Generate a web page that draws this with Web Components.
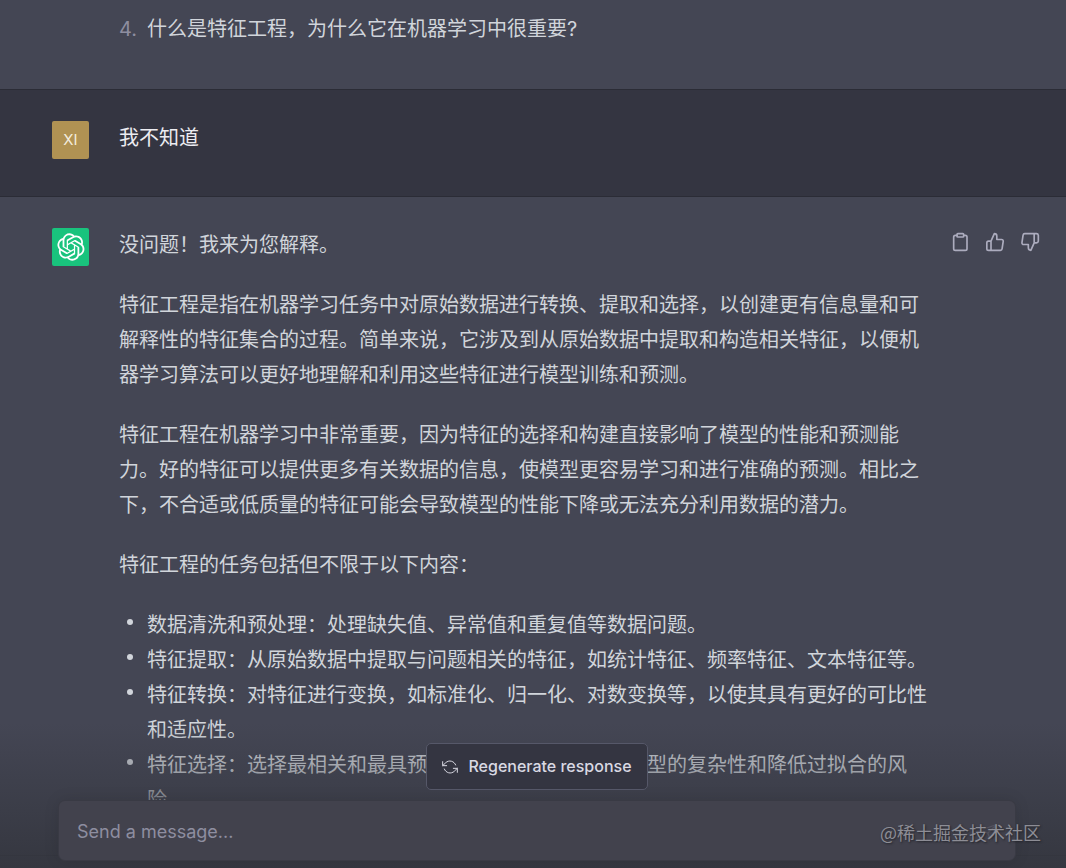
<!DOCTYPE html>
<html lang="zh-CN">
<head>
<meta charset="utf-8">
<meta name="viewport" content="width=device-width, initial-scale=1">
<title>Chat</title>
<style>
  body { margin: 0; background: #444654; font-family: Inter, "Noto Sans CJK SC", sans-serif; }
  ul, ol { list-style: none; }
  ol { counter-reset: item 3; }
  li { display: flex; }
  li::before { flex: none; }
  ol > li::before { counter-increment: item; content: counter(item) "."; width: 28px; color: #8e8ea0; }
  ul > li::before { content: ""; width: 6px; height: 6px; margin: 11px 14px 0 8px; border-radius: 50%; background: currentColor; }
</style>
</head>
<body>
<chat-app>
  <chat-message>
    <ol><li>什么是特征工程，为什么它在机器学习中很重要?</li></ol>
  </chat-message>
  <chat-message role-name="user">
    <user-avatar slot="avatar">XI</user-avatar>
    <p>我不知道</p>
  </chat-message>
  <chat-message>
    <bot-avatar slot="avatar"></bot-avatar>
    <p>没问题！我来为您解释。</p>
    <p>特征工程是指在机器学习任务中对原始数据进行转换、提取和选择，以创建更有信息量和可解释性的特征集合的过程。简单来说，它涉及到从原始数据中提取和构造相关特征，以便机器学习算法可以更好地理解和利用这些特征进行模型训练和预测。</p>
    <p>特征工程在机器学习中非常重要，因为特征的选择和构建直接影响了模型的性能和预测能力。好的特征可以提供更多有关数据的信息，使模型更容易学习和进行准确的预测。相比之下，不合适或低质量的特征可能会导致模型的性能下降或无法充分利用数据的潜力。</p>
    <p>特征工程的任务包括但不限于以下内容：</p>
    <ul>
      <li>数据清洗和预处理：处理缺失值、异常值和重复值等数据问题。</li>
      <li>特征提取：从原始数据中提取与问题相关的特征，如统计特征、频率特征、文本特征等。</li>
      <li>特征转换：对特征进行变换，如标准化、归一化、对数变换等，以使其具有更好的可比性和适应性。</li>
      <li>特征选择：选择最相关和最具预测能力的特征，以减少模型的复杂性和降低过拟合的风险。</li>
    </ul>
    <message-actions slot="actions"></message-actions>
  </chat-message>
  <chat-composer slot="footer"></chat-composer>
  <site-watermark slot="watermark">@稀土掘金技术社区</site-watermark>
</chat-app>

<script>
const define = (name, html) => {
  const template = document.createElement('template');
  template.innerHTML = html;
  customElements.define(name, class extends HTMLElement {
    constructor() {
      super();
      this.attachShadow({ mode: 'open' }).append(template.content.cloneNode(true));
    }
  });
};

define('chat-app', `
  <style>
    :host { display: block; position: relative; height: 100vh; overflow: hidden; }
    ::slotted([slot=footer]) { position: absolute; inset: auto 0 0 0; }
    ::slotted([slot=watermark]) { position: absolute; right: 25px; bottom: 21px; }
  </style>
  <main><slot></slot></main>
  <slot name="footer"></slot>
  <slot name="watermark"></slot>`);

define('chat-message', `
  <style>
    :host { display: block; background: #444654; color: #d1d5db; border-bottom: 1px solid #2b2c36;
      font-size: 20px; line-height: 35px; padding: 31px 26px 37px 52px; }
    :host(:first-child) { padding-top: 12px; padding-bottom: 42px; }
    :host([role-name=user]) { background: #343541; color: #ececf1; }
    .row { display: grid; grid-template-columns: 37px minmax(0, 1fr) 88px; max-width: 988px; margin: 0 auto; }
    .body { display: flex; flex-direction: column; gap: 25px; padding: 0 20px 0 30px; }
    ::slotted(*) { margin: 0 !important; padding-left: 0 !important; }
  </style>
  <article class="row">
    <div><slot name="avatar"></slot></div>
    <div class="body"><slot></slot></div>
    <div><slot name="actions"></slot></div>
  </article>`);

define('user-avatar', `
  <style>
    :host { display: flex; align-items: center; justify-content: center; height: 38px; border-radius: 2px;
      background: #b09253; color: #f3ecdd; font-size: 15px; line-height: 20px; }
  </style><slot></slot>`);

define('bot-avatar', `
  <style>
    :host { display: flex; align-items: center; justify-content: center; height: 38px; border-radius: 2px;
      background: #19c37d; color: #fff; }
  </style>
  <svg width="28" height="28" viewBox="0 0 41 41" fill="currentColor" role="img" aria-label="ChatGPT"><path d="M37.5324 16.8707C37.9808 15.5241 38.1363 14.0974 37.9886 12.6859C37.8409 11.2744 37.3934 9.91076 36.676 8.68622C35.6126 6.83404 33.9882 5.3676 32.0373 4.4985C30.0864 3.62941 27.9098 3.40259 25.8215 3.85078C24.8796 2.7893 23.7219 1.94125 22.4257 1.36341C21.1295 0.785575 19.7249 0.491269 18.3058 0.500197C16.1708 0.495044 14.0893 1.16803 12.3614 2.42214C10.6335 3.67624 9.34853 5.44666 8.6917 7.47815C7.30085 7.76286 5.98686 8.3414 4.8377 9.17505C3.68854 10.0087 2.73073 11.0782 2.02839 12.312C0.956464 14.1591 0.498905 16.2988 0.721698 18.4228C0.944492 20.5467 1.83612 22.5449 3.268 24.1293C2.81966 25.4759 2.66413 26.9026 2.81182 28.3141C2.95951 29.7256 3.40701 31.0892 4.12437 32.3138C5.18791 34.1659 6.8123 35.6322 8.76321 36.5013C10.7141 37.3704 12.8907 37.5973 14.9789 37.1492C15.9208 38.2107 17.0786 39.0587 18.3747 39.6366C19.6709 40.2144 21.0755 40.5087 22.4946 40.4998C24.6307 40.5054 26.7133 39.8321 28.4418 38.5772C30.1704 37.3223 31.4556 35.5506 32.1119 33.5179C33.5027 33.2332 34.8167 32.6547 35.9659 31.821C37.115 30.9874 38.0728 29.9178 38.7752 28.684C39.8458 26.8371 40.3023 24.6979 40.0789 22.5748C39.8556 20.4517 38.9639 18.4544 37.5324 16.8707ZM22.4978 37.8849C20.7443 37.8874 19.0459 37.2733 17.6994 36.1501C17.7601 36.117 17.8666 36.0586 17.936 36.0161L25.9004 31.4156C26.1003 31.3019 26.2663 31.137 26.3813 30.9378C26.4964 30.7386 26.5563 30.5124 26.5549 30.2825V19.0542L29.9213 20.998C29.9389 21.0068 29.9541 21.0198 29.9656 21.0359C29.977 21.052 29.9842 21.0707 29.9867 21.0902V30.3889C29.9842 32.375 29.1946 34.2791 27.7909 35.6841C26.3872 37.0892 24.4838 37.8806 22.4978 37.8849ZM6.39227 31.0064C5.51397 29.4888 5.19742 27.7107 5.49804 25.9832C5.55718 26.0187 5.66048 26.0818 5.73461 26.1244L13.699 30.7248C13.8975 30.8408 14.1233 30.902 14.3532 30.902C14.583 30.902 14.8088 30.8408 15.0073 30.7248L24.731 25.1103V28.9979C24.7321 29.0177 24.7283 29.0376 24.7199 29.0556C24.7115 29.0736 24.6988 29.0893 24.6829 29.1012L16.6317 33.7497C14.9096 34.7416 12.8643 35.0097 10.9447 34.4954C9.02506 33.9811 7.38785 32.7263 6.39227 31.0064ZM4.29707 13.6194C5.17156 12.0998 6.55279 10.9364 8.19885 10.3327C8.19885 10.4013 8.19491 10.5228 8.19491 10.6071V19.808C8.19351 20.0378 8.25334 20.2638 8.36823 20.4629C8.48312 20.6619 8.64893 20.8267 8.84863 20.9404L18.5723 26.5542L15.206 28.4979C15.1894 28.5089 15.1703 28.5155 15.1505 28.5173C15.1307 28.5191 15.1107 28.516 15.0924 28.5082L7.04046 23.8557C5.32135 22.8601 4.06716 21.2235 3.55289 19.3046C3.03862 17.3858 3.30624 15.3413 4.29707 13.6194ZM31.955 20.0556L22.2312 14.4411L25.5976 12.4981C25.6142 12.4872 25.6333 12.4805 25.6531 12.4787C25.6729 12.4769 25.6928 12.4801 25.7111 12.4879L33.7631 17.1364C34.9967 17.849 36.0017 18.8982 36.6606 20.1613C37.3194 21.4244 37.6047 22.849 37.4832 24.2684C37.3617 25.6878 36.8382 27.0432 35.9743 28.1759C35.1103 29.3086 33.9415 30.1717 32.6047 30.6641C32.6047 30.5947 32.6047 30.4733 32.6047 30.3889V21.188C32.6066 20.9586 32.5474 20.7328 32.4332 20.5338C32.319 20.3348 32.154 20.1698 31.955 20.0556ZM35.3055 15.0128C35.2464 14.9765 35.1431 14.9142 35.069 14.8717L27.1045 10.2712C26.906 10.1554 26.6803 10.0943 26.4504 10.0943C26.2206 10.0943 25.9948 10.1554 25.7963 10.2712L16.0726 15.8858V11.9982C16.0715 11.9783 16.0753 11.9585 16.0837 11.9405C16.0921 11.9225 16.1048 11.9068 16.1207 11.8949L24.1719 7.25025C25.4053 6.53903 26.8158 6.19376 28.2383 6.25482C29.6608 6.31589 31.0364 6.78077 32.2044 7.59508C33.3723 8.40939 34.2842 9.53945 34.8334 10.8531C35.3826 12.1667 35.5464 13.6095 35.3055 15.0128ZM14.2424 21.9419L10.8752 19.9981C10.8576 19.9893 10.8423 19.9763 10.8309 19.9602C10.8195 19.9441 10.8122 19.9254 10.8098 19.9058V10.6071C10.8107 9.18295 11.2173 7.78848 11.9819 6.58696C12.7466 5.38544 13.8377 4.42659 15.1275 3.82264C16.4173 3.21869 17.8524 2.99464 19.2649 3.1767C20.6775 3.35876 22.0089 3.93941 23.1034 4.85067C23.0427 4.88379 22.937 4.94215 22.8668 4.98473L14.9024 9.58517C14.7025 9.69878 14.5366 9.86356 14.4215 10.0626C14.3065 10.2616 14.2466 10.4877 14.2479 10.7175L14.2424 21.9419ZM16.071 17.9991L20.4018 15.4978L24.7325 17.9975V22.9985L20.4018 25.4983L16.071 22.9985V17.9991Z"/></svg>`);

define('message-actions', `
  <style>
    :host { display: flex; justify-content: space-between; padding-top: 4px; }
    button { display: flex; padding: 0; border: 0; background: none; color: #acacbe; }
    svg { width: 20px; height: 20px; fill: none; stroke: currentColor; stroke-width: 2; stroke-linecap: round; stroke-linejoin: round; }
  </style>
  <button type="button" aria-label="Copy"><svg viewBox="2 0 24 24"><path d="M16 4h2a2 2 0 0 1 2 2v14a2 2 0 0 1-2 2H6a2 2 0 0 1-2-2V6a2 2 0 0 1 2-2h2"/><rect x="8" y="2" width="8" height="4" rx="1"/></svg></button>
  <button type="button" aria-label="Good response"><svg viewBox="1 0 24 24"><path d="M14 9V5a3 3 0 0 0-3-3l-4 9v11h11.28a2 2 0 0 0 2-1.7l1.38-9a2 2 0 0 0-2-2.3zM7 22H4a2 2 0 0 1-2-2v-7a2 2 0 0 1 2-2h3"/></svg></button>
  <button type="button" aria-label="Bad response"><svg viewBox="0 0 24 24"><path d="M10 15v4a3 3 0 0 0 3 3l4-9V2H5.72a2 2 0 0 0-2 1.7l-1.38 9a2 2 0 0 0 2 2.3zm7-13h2.67A2.31 2.31 0 0 1 22 4v7a2.31 2.31 0 0 1-2.33 2H17"/></svg></button>`);

define('chat-composer', `
  <style>
    :host { display: block; padding: 20px 50px 7px 58px; pointer-events: none;
      background: linear-gradient(180deg, rgba(53,55,64,0), #353740); }
    form { display: flex; flex-direction: column; align-items: center; gap: 10px; max-width: 960px; margin: 0 auto; }
    button, input { font-family: inherit; pointer-events: auto; }
    .again { display: flex; align-items: center; gap: 10px; height: 47px; box-sizing: border-box; padding: 0 15px;
      border: 1px solid #565869; border-radius: 5px; background: #343541; color: #d9d9e3; font-size: 16px; line-height: 25px; font-weight: 500; }
    .again svg { width: 16px; height: 16px; }
    .box { display: flex; align-items: center; width: 100%; height: 61px; box-sizing: border-box; padding: 2px 16px 0 18px;
      border: 1px solid #393a44; border-radius: 7px; background: #42424d; box-shadow: 0 0 15px rgba(0,0,0,.1); }
    input { flex: 1; min-width: 0; padding: 0; border: 0; outline: 0; background: none; color: #fff; font-size: 18px; line-height: 30px; }
    input::placeholder { color: #8e8ea0; opacity: 1; }
    .send { display: flex; padding: 0; border: 0; background: none; color: #53535f; }
  </style>
  <form>
    <button class="again" type="button"><svg viewBox="0 0 24 24" fill="none" stroke="currentColor" stroke-width="1.5" stroke-linecap="round" stroke-linejoin="round"><path d="M1 4v6h6M23 20v-6h-6"/><path d="M20.5 9A9 9 0 0 0 5.6 5.6L1 10M23 14l-4.6 4.4A9 9 0 0 1 3.5 15"/></svg>Regenerate response</button>
    <div class="box">
      <input type="text" placeholder="Send a message..." aria-label="Send a message">
      <button class="send" type="button" aria-label="Send"><svg width="20" height="20" viewBox="0 0 16 16" fill="none" stroke="currentColor" stroke-linejoin="round"><path d="M14 2 1.500 6.500 7 9 9.500 14.500zM14 2 7 9"/></svg></button>
    </div>
  </form>`);

define('site-watermark', `
  <style>
    :host { display: block; font-family: "Noto Sans CJK SC", sans-serif; font-size: 18px; line-height: 30px;
      color: #8d8d95; text-shadow: 1px 1px 2px #22232a; pointer-events: none; }
  </style><slot></slot>`);
</script>
</body>
</html>
